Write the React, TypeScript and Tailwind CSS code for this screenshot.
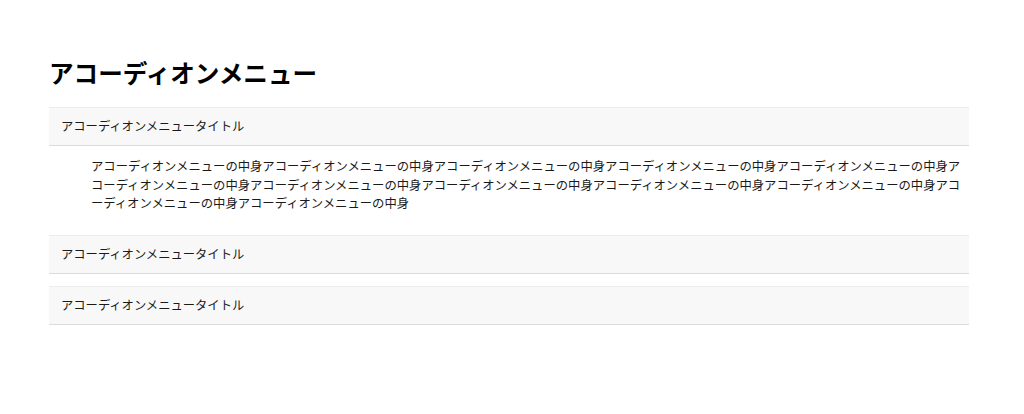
const FONT = "font-['Noto_Sans_CJK_JP','Noto_Sans',sans-serif]";

const body = "アコーディオンメニューの中身".repeat(12);

type Item = { title: string; open: boolean; content?: string };

const items: Item[] = [
  { title: "アコーディオンメニュータイトル", open: true, content: body },
  { title: "アコーディオンメニュータイトル", open: false },
  { title: "アコーディオンメニュータイトル", open: false },
];

function AccordionItem({ item }: { item: Item }) {
  return (
    <div className="mb-[12px]">
      <div className="flex h-[39px] items-center border-t border-b border-t-[#ececec] border-b-[#dcdcdc] bg-[#f8f8f8] pl-[12px] text-[12.3px] text-[#1a1a1a]">
        {item.title}
      </div>
      {item.open && (
        <div className="pt-[11px] pr-[5px] pb-[10px] pl-[42px] text-[12.33px] leading-[18.6px] text-[#1a1a1a]">
          {item.content}
        </div>
      )}
    </div>
  );
}

export default function App() {
  return (
    <div className={`${FONT} min-h-[414px] bg-white px-[49px] pt-[54px]`}>
      <div className="w-[920px]">
        <h1 className="mb-[17px] text-[24.6px] leading-[36px] font-bold text-black">
          アコーディオンメニュー
        </h1>
        {items.map((item, i) => (
          <AccordionItem key={i} item={item} />
        ))}
      </div>
    </div>
  );
}
